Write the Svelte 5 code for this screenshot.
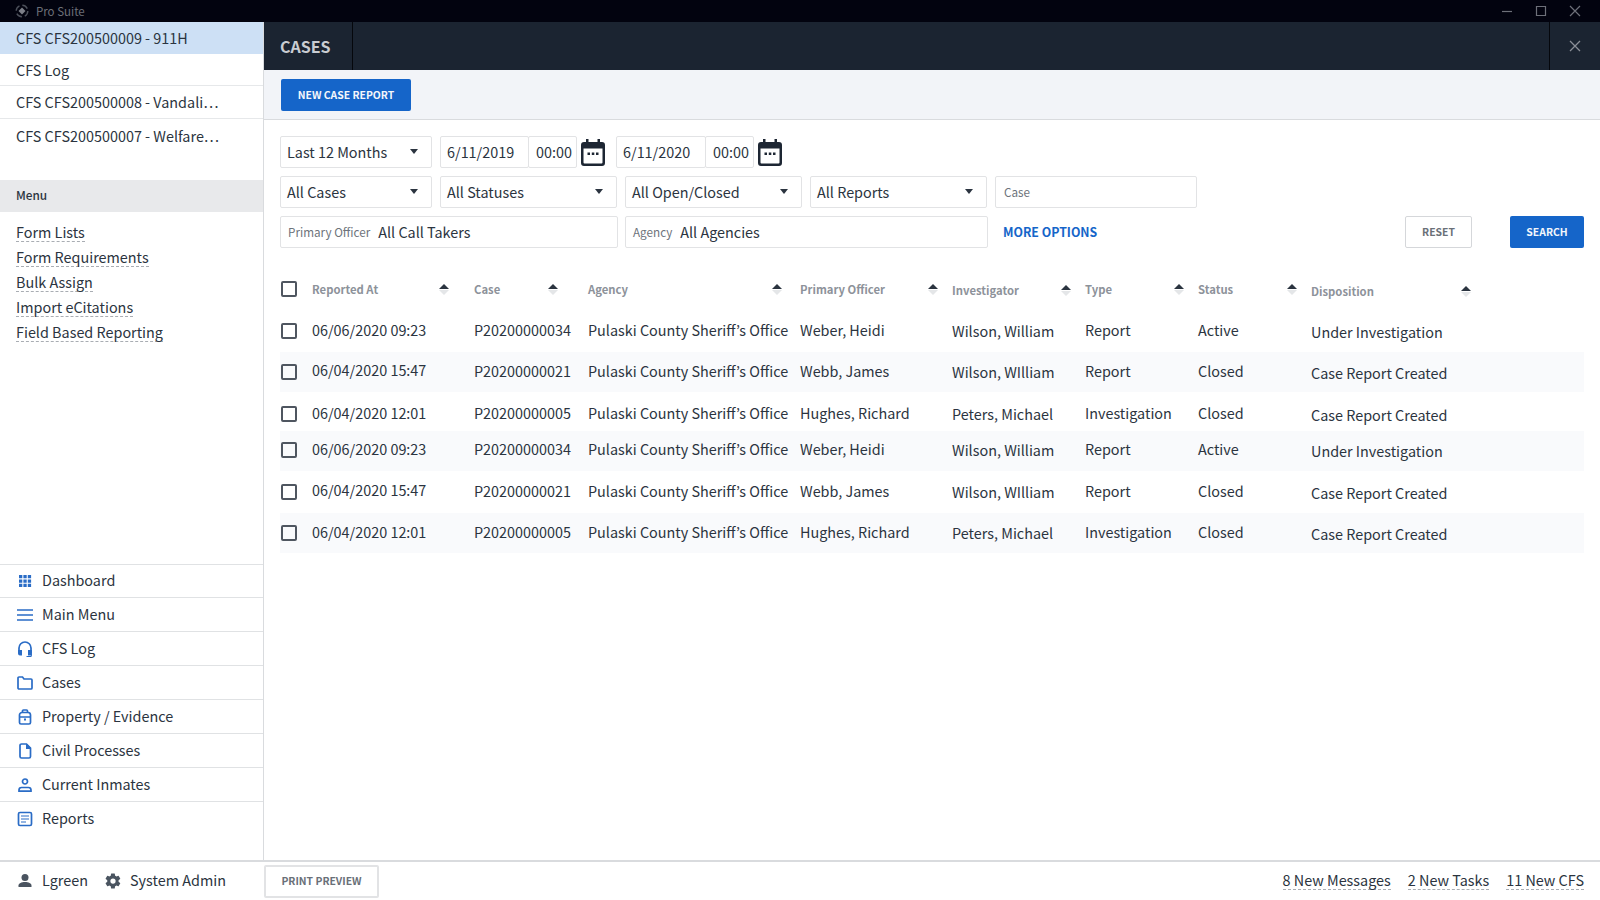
<script>
  const tabs = [
    { t: 'CFS CFS200500009 - 911H', active: true, h: 32 },
    { t: 'CFS Log', h: 32 },
    { t: 'CFS CFS200500008 - Vandali…', h: 33 },
    { t: 'CFS CFS200500007 - Welfare…', h: 33, last: true }
  ];
  const links = ['Form Lists', 'Form Requirements', 'Bulk Assign', 'Import eCitations', 'Field Based Reporting'];
  const nav = [
    { t: 'Dashboard', i: 'grid', h: 33 },
    { t: 'Main Menu', i: 'menu', h: 34 },
    { t: 'CFS Log', i: 'headset', h: 34 },
    { t: 'Cases', i: 'folder', h: 34 },
    { t: 'Property / Evidence', i: 'bag', h: 34 },
    { t: 'Civil Processes', i: 'file', h: 34 },
    { t: 'Current Inmates', i: 'person', h: 34 },
    { t: 'Reports', i: 'list', h: 34 }
  ];
  const cols = [
    { t: 'Reported At', w: 126 },
    { t: 'Case', w: 73 },
    { t: 'Agency', w: 183 },
    { t: 'Primary Officer', w: 127 },
    { t: 'Investigator', w: 108, cls: 'inv' },
    { t: 'Type', w: 88 },
    { t: 'Status', w: 88 },
    { t: 'Disposition', w: 149, cls: 'disp' }
  ];
  const A = ['06/06/2020 09:23', 'P20200000034', 'Weber, Heidi', 'Wilson, William', 'Report', 'Active', 'Under Investigation'];
  const B = ['06/04/2020 15:47', 'P20200000021', 'Webb, James', 'Wilson, WIlliam', 'Report', 'Closed', 'Case Report Created'];
  const C = ['06/04/2020 12:01', 'P20200000005', 'Hughes, Richard', 'Peters, Michael', 'Investigation', 'Closed', 'Case Report Created'];
  const rows = [
    { d: A, h: 43, pt: 0, pb: 0, band: false },
    { d: B, h: 40, pt: 0, pb: 0, band: true, up: true },
    { d: C, h: 39, pt: 5, pb: 0, band: false },
    { d: A, h: 40, pt: 0, pb: 2, band: true },
    { d: B, h: 42, pt: 0, pb: 0, band: false, up: true },
    { d: C, h: 40, pt: 0, pb: 0, band: true }
  ];
</script>

{#snippet caret()}
  <svg class="caret" viewBox="0 0 8 5" aria-hidden="true"><path d="M0 0h8L4 5z" /></svg>
{/snippet}

{#snippet calendar()}
  <svg class="cal" viewBox="0 0 24 27" aria-hidden="true">
    <path fill="#1d2633" fill-rule="evenodd" d="M5 0h2.500v3h9V0H19v3h2a3 3 0 0 1 3 3v18a3 3 0 0 1-3 3H3a3 3 0 0 1-3-3V6a3 3 0 0 1 3-3h2zM2.500 9.500V23.500a1 1 0 0 0 1 1h17a1 1 0 0 0 1-1V9.500z" />
    <path fill="#1d2633" d="M6.500 13.500h2.500v2.500H6.500zM10.800 13.500h2.500v2.500h-2.500zM15 13.500h2.500v2.500H15z" />
  </svg>
{/snippet}

{#snippet xmark()}
  <svg class="x" viewBox="0 0 12 12" aria-hidden="true"><path d="M1 1l10 10M11 1L1 11" /></svg>
{/snippet}

{#snippet icon(name)}
  <svg class="nav-ico" viewBox="0 0 16 16" aria-hidden="true">
    {#if name === 'grid'}
      <path class="fill" d="M2 2h3.300v3.300H2zM6.400 2h3.300v3.300H6.400zM10.800 2h3.300v3.300h-3.300zM2 6.400h3.300v3.300H2zM6.400 6.400h3.300v3.300H6.400zM10.800 6.400h3.300v3.300h-3.300zM2 10.800h3.300v3.300H2zM6.400 10.800h3.300v3.300H6.400zM10.800 10.800h3.300v3.300h-3.300z" />
    {:else if name === 'menu'}
      <path class="line" d="M0 3h16M0 8h16M0 13h16" />
    {:else if name === 'headset'}
      <path class="line" d="M2 10V7a6 6 0 0 1 12 0V10" />
      <path class="fill" d="M1 9h4v5.500H3a2 2 0 0 1-2-2zM11 9h4v3.500a2 2 0 0 1-2 2h-2z" />
      <path class="line thin" d="M14.300 13v1.500a1 1 0 0 1-1 1H9.500" />
    {:else if name === 'folder'}
      <path class="line" d="M1 3a1 1 0 0 1 1-1h3.500l1.500 2h7a1 1 0 0 1 1 1v8a1 1 0 0 1-1 1H2a1 1 0 0 1-1-1z" />
    {:else if name === 'bag'}
      <path class="line" d="M2.500 6a2.500 2.500 0 0 1 2.500-2.500h6A2.500 2.500 0 0 1 13.500 6v7.500a1.500 1.500 0 0 1-1.500 1.500H4a1.500 1.500 0 0 1-1.500-1.500z" />
      <path class="line" d="M5.500 3.500V2a1 1 0 0 1 1-1h3a1 1 0 0 1 1 1v1.500M3 8h10" />
      <path class="fill" d="M7 9.500h2v2H7z" />
    {:else if name === 'file'}
      <path class="line" d="M3 2.500a1.500 1.500 0 0 1 1.500-1.500H9.500L13.500 5v8.500a1.500 1.500 0 0 1-1.500 1.500H4.500A1.500 1.500 0 0 1 3 13.500z" />
      <path class="fill" d="M9 1h1l4 4v1H9z" />
    {:else if name === 'person'}
      <circle class="line" cx="8" cy="4.500" r="2.500" />
      <path class="line" d="M2 14.200v-1.200A2.500 2.500 0 0 1 4.500 10.500h7A2.500 2.500 0 0 1 14 13v1.200z" />
    {:else}
      <rect class="line" x="1.500" y="1.500" width="13" height="13" rx="1.500" />
      <path class="line thin" d="M4 5h8M4 8h8M4 11h5" />
    {/if}
  </svg>
{/snippet}

<div class="app">
  <header class="titlebar">
    <svg class="logo" viewBox="0 0 14 14" aria-hidden="true">
      <circle cx="7" cy="7" r="5.800" fill="none" stroke="#4d515b" stroke-width="1.400" stroke-dasharray="6 3" />
      <path d="M7 3.500l3.500 3.500L7 10.500 3.500 7z" fill="#7d8089" />
    </svg>
    <span class="app-name">Pro Suite</span>
    <div class="win">
      <svg viewBox="0 0 12 12" aria-hidden="true"><path d="M1 6.500h10" /></svg>
      <svg viewBox="0 0 12 12" aria-hidden="true"><path d="M1.500 1.500h9v9h-9z" /></svg>
      <svg viewBox="0 0 12 12" aria-hidden="true"><path d="M1 1l10 10M11 1L1 11" /></svg>
    </div>
  </header>

  <div class="body">
    <aside class="sidebar">
      <div class="tabs">
        {#each tabs as tab}
          <div class="tab" class:active={tab.active} class:last={tab.last} style:height="{tab.h}px">{tab.t}</div>
        {/each}
      </div>
      <div class="menu-head">Menu</div>
      <div class="links">
        {#each links as l}
          <div class="link-row"><span class="dotted">{l}</span></div>
        {/each}
      </div>
      <nav class="nav">
        {#each nav as n}
          <div class="nav-row" style:height="{n.h}px">
            <span class="nav-slot">{@render icon(n.i)}</span>
            <span class="nav-text">{n.t}</span>
          </div>
        {/each}
      </nav>
    </aside>

    <main class="main">
      <div class="head">
        <div class="head-tab">CASES</div>
        <div class="head-close">{@render xmark()}</div>
      </div>
      <div class="toolbar"><button class="btn primary new">NEW CASE REPORT</button></div>

      <section class="filters">
        <div class="frow">
          <div class="field sel w1">Last 12 Months {@render caret()}</div>
          <div class="field date">6/11/2019</div>
          <div class="field time">00:00</div>
          <span class="cal-slot">{@render calendar()}</span>
          <div class="field date second">6/11/2020</div>
          <div class="field time">00:00</div>
          <span class="cal-slot">{@render calendar()}</span>
        </div>
        <div class="frow">
          <div class="field sel w1">All Cases {@render caret()}</div>
          <div class="field sel w2">All Statuses {@render caret()}</div>
          <div class="field sel w2">All Open/Closed {@render caret()}</div>
          <div class="field sel w2">All Reports {@render caret()}</div>
          <div class="field case"><span class="lbl">Case</span></div>
        </div>
        <div class="frow">
          <div class="field w3"><span class="lbl">Primary Officer</span>All Call Takers</div>
          <div class="field w4"><span class="lbl">Agency</span>All Agencies</div>
          <span class="more">MORE OPTIONS</span>
          <button class="btn reset">RESET</button>
          <button class="btn primary search">SEARCH</button>
        </div>
      </section>

      <section class="table">
        <div class="thead">
          <span class="cb"></span>
          {#each cols as c}
            <div class="th {c.cls ?? ''}">
              <span class="th-label" style:width="{c.w}px">{c.t}</span>
              <span class="sort"><i class="up"></i><i class="down"></i></span>
            </div>
          {/each}
        </div>
        {#each rows as r}
          <div class="tr" class:band={r.band} style:height="{r.h}px" style:padding-top="{r.pt}px" style:padding-bottom="{r.pb}px">
            <span class="cb"></span>
            <div class="td" class:up-1={r.up}>{r.d[0]}</div>
            <div class="td">{r.d[1]}</div>
            <div class="td">Pulaski County Sheriff’s Office</div>
            <div class="td">{r.d[2]}</div>
            <div class="td inv">{r.d[3]}</div>
            <div class="td">{r.d[4]}</div>
            <div class="td">{r.d[5]}</div>
            <div class="td disp">{r.d[6]}</div>
          </div>
        {/each}
      </section>
    </main>
  </div>

  <footer class="footer">
    <div class="who">
      <span class="nav-slot">
        <svg class="nav-ico" viewBox="0 0 16 16" aria-hidden="true"><circle cx="8" cy="4.500" r="3.500" fill="#4a5460" /><path d="M1.500 14v-1.500c0-2 3-3.500 6.500-3.500s6.500 1.500 6.500 3.500V14z" fill="#4a5460" /></svg>
      </span>
      <span class="nav-text">Lgreen</span>
      <svg class="gear" viewBox="0 0 24 24" aria-hidden="true"><path fill="#4a5460" d="M19.400 13c.04-.32.060-.66.060-1s-.02-.68-.060-1l2.100-1.650a.5.5 0 0 0 .12-.64l-2-3.460a.5.5 0 0 0-.61-.22l-2.490 1a7.300 7.300 0 0 0-1.730-1l-.38-2.650A.49.490 0 0 0 13.900 2h-4a.49.490 0 0 0-.49.42l-.38 2.650a7.700 7.700 0 0 0-1.730 1l-2.490-1a.5.5 0 0 0-.61.22l-2 3.460a.49.490 0 0 0 .12.640L4.420 11c-.04.32-.070.66-.070 1s.030.68.070 1l-2.100 1.650a.5.5 0 0 0-.12.64l2 3.460c.12.220.39.300.61.220l2.490-1c.52.400 1.100.74 1.730 1l.38 2.650c.04.240.25.420.49.420h4c.25 0 .45-.18.49-.42l.38-2.650a7.700 7.700 0 0 0 1.730-1l2.490 1c.22.080.49 0 .61-.22l2-3.460a.5.5 0 0 0-.12-.64zM12 15.500a3.500 3.500 0 1 1 0-7 3.500 3.500 0 0 1 0 7z" /></svg>
      <span class="nav-text">System Admin</span>
    </div>
    <button class="btn print">PRINT PREVIEW</button>
    <div class="notes">
      <span class="dotted">8 New Messages</span>
      <span class="dotted">2 New Tasks</span>
      <span class="dotted">11 New CFS</span>
    </div>
  </footer>
</div>

<style>
  :global(body) { margin: 0; background: #fff; }
  .app {
    width: 1600px; height: 900px; overflow: hidden;
    display: flex; flex-direction: column;
    font-family: "Noto Sans CJK KR", "Noto Sans", sans-serif;
    font-size: 14.400px; color: #2b3440;
  }
  .titlebar { height: 22px; flex: none; background: #02030f; display: flex; align-items: center; padding-left: 15px; color: #6d7079; font-size: 11.500px; }
  .logo { width: 14px; height: 14px; margin-right: 7px; }
  .win { margin-left: auto; display: flex; gap: 22px; padding-right: 19px; }
  .win svg { width: 12px; height: 12px; fill: none; stroke: #6d7079; stroke-width: 1.200; }

  .body { flex: 1; display: flex; min-height: 0; }
  .sidebar { width: 263px; flex: none; border-right: 1px solid #d9dbde; display: flex; flex-direction: column; }
  .tabs { height: 158px; flex: none; }
  .tab { padding: 0 0 1px 16px; display: flex; align-items: center; border-bottom: 1px solid #e6e8ea; box-sizing: border-box; }
  .tab.active { background: #cde0f5; border-bottom: 0; }
  .tab.last { border-bottom: 0; }
  .menu-head { height: 32px; flex: none; box-sizing: border-box; background: #e8e9eb; display: flex; align-items: center; padding: 0 0 3px 16px; font-size: 11.800px; font-weight: 500; }
  .links { flex: 1; padding-top: 7px; }
  .link-row { height: 25px; display: flex; align-items: center; padding-left: 16px; }
  .dotted { border-bottom: 1px dashed #a9adb3; line-height: 19px; }
  .nav { flex: none; border-top: 1px solid #e0e2e4; margin-bottom: 24px; }
  .nav-row { display: flex; align-items: center; box-sizing: border-box; border-bottom: 1px solid #e0e2e4; }
  .nav-row:last-child { border-bottom: 0; }
  .nav-text { margin-bottom: 3px; }
  .nav-slot { width: 42px; flex: none; display: flex; justify-content: flex-end; padding-right: 9px; box-sizing: border-box; }
  .nav-ico { width: 16px; height: 16px; }
  .nav-ico .fill { fill: #2a6cc6; }
  .nav-ico .line { fill: none; stroke: #2a6cc6; stroke-width: 1.700; }
  .nav-ico .thin { stroke-width: 1.200; }

  .main { flex: 1; min-width: 0; display: flex; flex-direction: column; }
  .head { height: 48px; flex: none; background: #1b2431; display: flex; justify-content: space-between; }
  .head-tab { padding-left: 16px; width: 72px; display: flex; align-items: center; color: #c9ccd1; font-size: 16px; font-weight: 700; border-right: 1px solid #05070c; }
  .head-close { width: 50px; display: flex; align-items: center; justify-content: center; border-left: 1px solid #05070c; }
  .x { width: 12px; height: 12px; fill: none; stroke: #8b8f97; stroke-width: 1.300; }
  .toolbar { height: 50px; flex: none; background: #f2f4f8; border-bottom: 1px solid #d9dbde; padding: 9px 0 0 17px; box-sizing: border-box; }
  .btn { font-family: inherit; font-size: 10.400px; font-weight: 700; border-radius: 2px; padding: 0 0 2px; cursor: pointer; }
  .btn.primary { background: #1565c9; border: 0; color: #f3f6fb; }
  .new { width: 130px; height: 32px; }

  .filters { padding: 16px 16px 0; display: flex; flex-direction: column; gap: 8px; }
  .frow { display: flex; height: 32px; align-items: center; }
  .field { height: 32px; box-sizing: border-box; border: 1px solid #e2e3e5; border-radius: 2px; display: flex; align-items: center; padding: 0 0 2px 6px; background: #fff; white-space: nowrap; }
  .sel { justify-content: space-between; padding-right: 13px; }
  .caret { width: 8px; height: 5px; fill: #2b3440; margin-top: 1px; }
  .w1 { width: 152px; margin-right: 8px; }
  .w2 { width: 177px; margin-right: 8px; }
  .date { width: 89px; }
  .second { margin-left: 11px; width: 90px; }
  .time { width: 49px; margin-left: -1px; padding-left: 7px; }
  .cal-slot { margin-left: 4px; width: 24px; display: flex; }
  .cal { width: 24px; height: 27px; }
  .case { width: 202px; padding-left: 7px; }
  .lbl { font-size: 11.700px; color: #6d737b; margin-right: 8px; margin-left: 1px; }
  .w3 { width: 338px; margin-right: 7px; }
  .w4 { width: 363px; }
  .more { margin: 0 0 1px 15px; color: #1565c9; font-size: 12.300px; font-weight: 700; }
  .reset { margin-left: auto; width: 67px; height: 32px; background: #fff; border: 1px solid #d5d7da; color: #6a7078; }
  .search { margin-left: 38px; width: 74px; height: 32px; }

  .table { margin: 21px 16px 0; }
  .thead, .tr { display: grid; grid-template-columns: 32px 162px 114px 212px 152px 133px 113px 113px 1fr; align-items: center; box-sizing: border-box; }
  .thead { height: 40px; }
  .th { display: flex; align-items: center; color: #8d929a; font-size: 11.300px; font-weight: 700; }
  .th-label { flex: none; }
  .sort { display: flex; flex-direction: column; gap: 1px; width: 12px; align-items: center; }
  .sort i { width: 0; height: 0; border-left: 5px solid transparent; border-right: 5px solid transparent; }
  .sort .up { border-bottom: 5px solid #2b3440; }
  .sort .down { border-top: 5px solid #e4e6e8; }
  .cb { display: block; width: 12px; height: 12px; border: 2px solid #4f5660; border-radius: 2px; margin-left: 1px; }
  .tr.band { background: #f9fafc; }
  .td { white-space: nowrap; margin-bottom: 3px; }
  .up-1 { margin-bottom: 5px; }
  .inv { padding-top: 2px; }
  .disp { padding-top: 4px; }

  .footer { height: 40px; flex: none; box-sizing: border-box; border-top: 2px solid #d9dbde; display: flex; align-items: center; }
  .who { width: 264px; display: flex; align-items: center; flex: none; }
  .gear { width: 18px; height: 18px; margin: 0 8px 0 16px; }
  .print { width: 115px; height: 33px; background: #fff; border: 2px solid #e2e3e5; color: #6a7078; }
  .notes { margin: 0 0 2px auto; display: flex; gap: 17px; padding-right: 16px; }
</style>
